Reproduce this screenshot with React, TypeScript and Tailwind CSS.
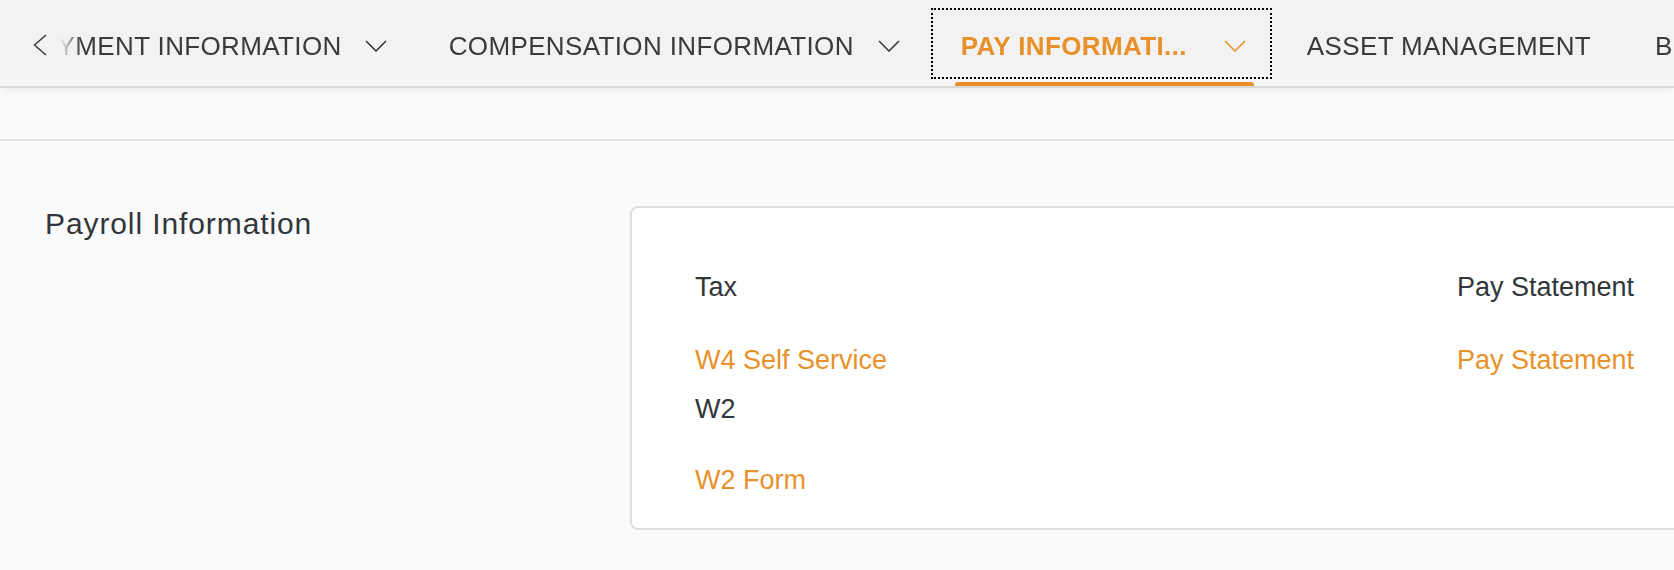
import type React from 'react'

interface TabProps {
  label: string
  hasMenu?: boolean
  selected?: boolean
  className?: string
  textClassName?: string
  chevronClassName?: string
}

function ChevronDown({ className = '' }: { className?: string }): React.JSX.Element {
  return (
    <svg className={className} width="22" height="12" viewBox="0 0 22 12" fill="none">
      <polyline points="1,1 11,11 21,1" stroke="currentColor" strokeWidth="1.6" />
    </svg>
  )
}

function Tab({
  label,
  hasMenu = false,
  selected = false,
  className = '',
  textClassName = '',
  chevronClassName = 'ml-[23px]'
}: TabProps): React.JSX.Element {
  return (
    <div className="flex shrink-0 flex-col">
      <div
        className={`flex h-[71px] items-center border-2 pt-[4px] ${
          selected ? 'border-dotted border-black text-[#e8912a]' : 'border-transparent text-[#3a3a3a]'
        } ${className}`}
      >
        <span
          className={`inline-block whitespace-nowrap text-[26px] leading-none tracking-[0.37px] ${
            selected ? 'font-bold' : ''
          } ${textClassName}`}
        >
          {label}
        </span>
        {hasMenu && <ChevronDown className={`shrink-0 ${chevronClassName}`} />}
      </div>
      {/* Selection indicator */}
      <div
        className={`mt-[3px] h-[4px] rounded-t-[3px] ${
          selected ? 'ml-[24px] mr-[18px] bg-[#e8912a]' : 'bg-transparent'
        }`}
      />
    </div>
  )
}

export default function App(): React.JSX.Element {
  return (
    <div className="h-[570px] w-full overflow-hidden bg-[#fafafa] font-['Liberation_Sans',Arial,sans-serif] text-[#32363a]">
      {/* Anchor bar */}
      <div className="relative z-10 flex h-[88px] items-start border-b-2 border-[#d9d9d9] bg-gradient-to-b from-[#f2f2f2] from-85% to-[#f5f5f5] pt-[8px] shadow-[0_3px_8px_-2px_rgba(0,0,0,0.07)]">
        <div className="flex h-[71px] w-[56px] shrink-0 items-center pl-[33px] pt-[2px] text-[#3a3a3a]">
          <svg width="14" height="22" viewBox="0 0 14 22" fill="none">
            <polyline points="13,1 1.5,11 13,21" stroke="currentColor" strokeWidth="1.5" />
          </svg>
        </div>
        <div className="flex-1 overflow-hidden [mask-image:linear-gradient(to_right,transparent_0px,transparent_4px,black_26px)] [-webkit-mask-image:linear-gradient(to_right,transparent_0px,transparent_4px,black_26px)]">
          <div className="ml-[-61px] flex">
            <Tab label="PAYMENT INFORMATION" hasMenu className="px-[29px]" />
            <Tab
              label="COMPENSATION INFORMATION"
              hasMenu
              className="px-[29px]"
              chevronClassName="ml-[24px]"
            />
            <Tab
              label="PAY INFORMATI..."
              hasMenu
              selected
              className="pl-[28px] pr-[24px]"
              textClassName="w-[234px]"
              chevronClassName="ml-[29px]"
            />
            <Tab label="ASSET MANAGEMENT" className="pl-[33px] pr-[31px]" />
            <Tab label="BENEFITS" hasMenu className="px-[29px]" />
          </div>
        </div>
      </div>

      {/* Header area */}
      <div className="h-[53px] border-b-2 border-[#e2e2e2] bg-[#fafafa]" />

      {/* Section */}
      <div className="flex pl-[45px] pt-[65px]">
        <h2 className="w-[585px] shrink-0 text-[30px] font-normal leading-[36px] tracking-[0.9px]">
          Payroll Information
        </h2>
        <div className="w-[1200px] shrink-0 rounded-[8px] border-2 border-[#dedede] bg-white pb-[32px] pl-[63px] pt-[63px]">
          <div className="flex text-[27px] leading-[32px]">
            <div className="flex w-[762px] shrink-0 flex-col items-start">
              <div>Tax</div>
              <a className="mt-[41px] text-[#e8912a]">W4 Self Service</a>
              <div className="mt-[17px]">W2</div>
              <a className="mt-[39px] text-[#e8912a]">W2 Form</a>
            </div>
            <div className="flex flex-col items-start">
              <div>Pay Statement</div>
              <a className="mt-[41px] text-[#e8912a]">Pay Statement</a>
            </div>
          </div>
        </div>
      </div>
    </div>
  )
}
